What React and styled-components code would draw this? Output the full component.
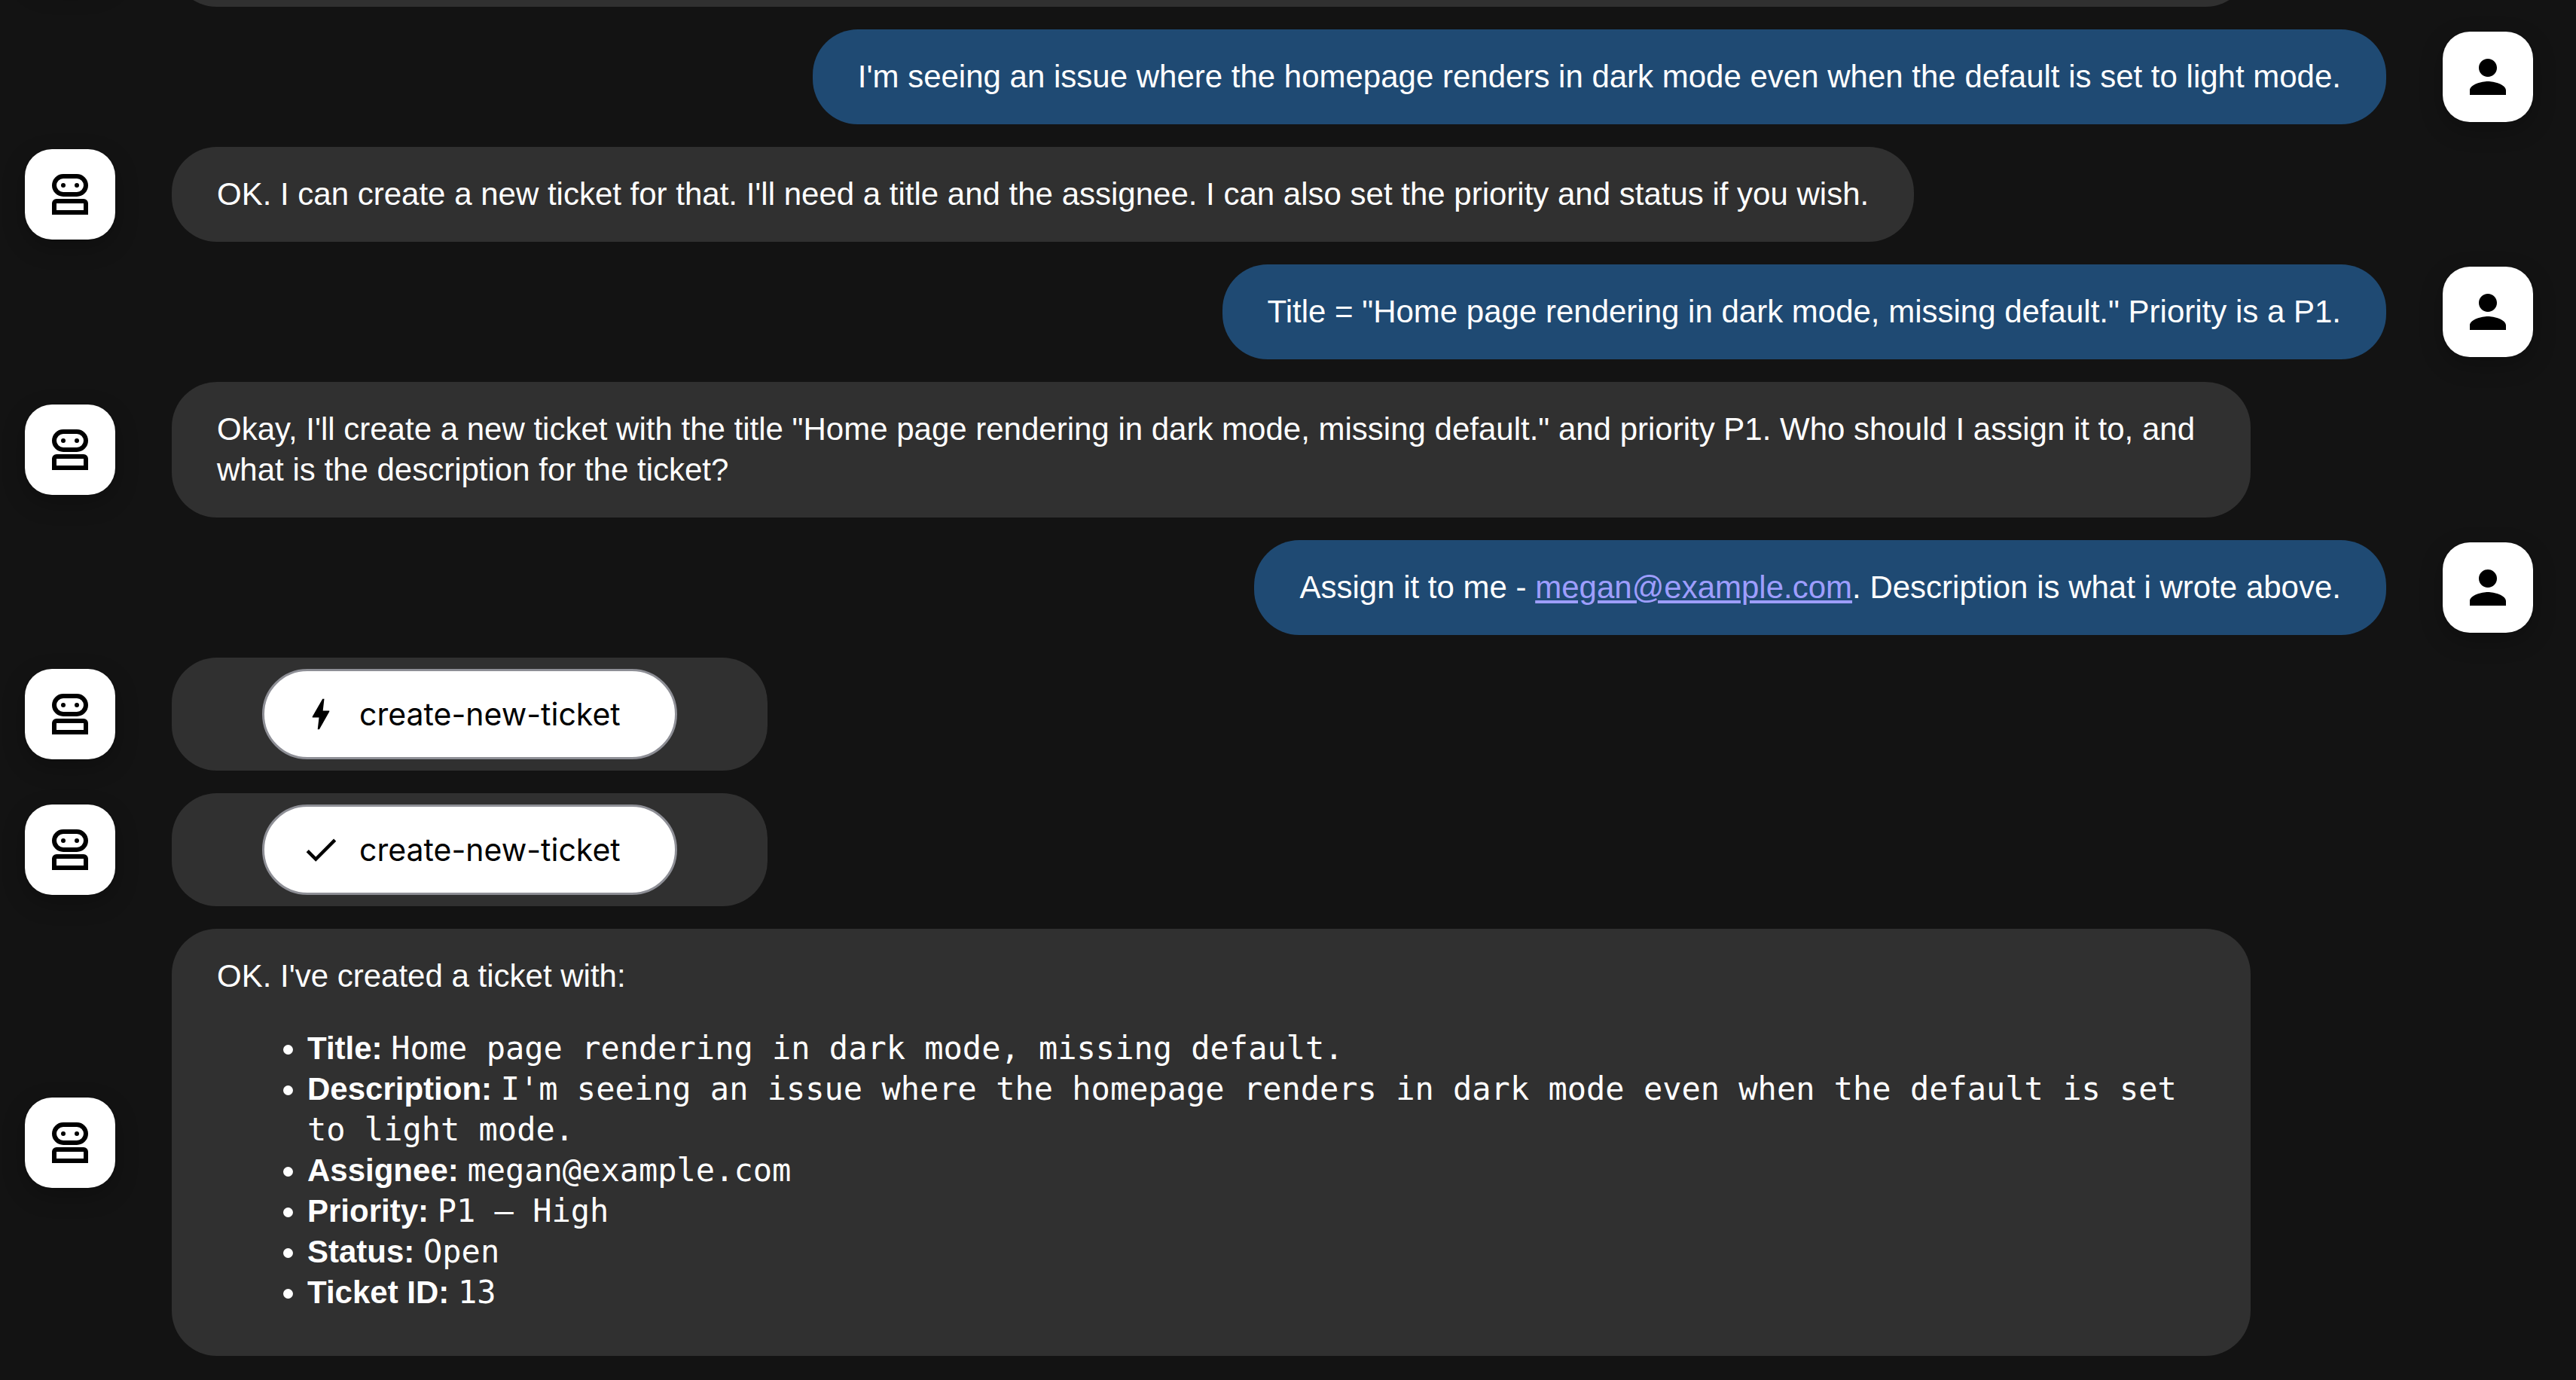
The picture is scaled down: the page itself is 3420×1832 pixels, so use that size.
import React from "react";
import styled, { createGlobalStyle } from "styled-components";

const GlobalStyle = createGlobalStyle`
  *, *::before, *::after {
    box-sizing: border-box;
  }

  body {
    margin: 0;
    background: #131313;
    color: #fff;
    font-family: "Liberation Sans", Arial, sans-serif;
    font-size: 42px;
    line-height: 54px;
  }
`;

/* The thread stays scrolled to its newest message. */
const Thread = styled.main`
  display: flex;
  flex-direction: column;
  justify-content: flex-end;
  gap: 30px;
  height: 100vh;
  overflow: hidden;
  padding: 0 57px 32px 33px;
`;

const MessageRow = styled.article`
  display: flex;
  flex-shrink: 0;
  flex-direction: ${({ $from }) => ($from === "user" ? "row-reverse" : "row")};
  align-items: center;
  gap: 75px;
`;

const Avatar = styled.div`
  display: flex;
  flex: none;
  align-items: center;
  justify-content: center;
  width: 120px;
  height: 120px;
  border-radius: 36px;
  background: #fff;
  color: #000;
  box-shadow: 0 10px 30px rgba(0, 0, 0, 0.25);

  svg {
    width: 72px;
    height: 72px;
  }
`;

const Lane = styled.div`
  display: flex;
  flex: 1;
  min-width: 0;
  justify-content: ${({ $from }) => ($from === "user" ? "flex-end" : "flex-start")};
  ${({ $from }) => ($from === "user" ? "padding-left: 375px;" : "padding-right: 375px;")}
`;

const Bubble = styled.div`
  padding: ${({ $chip }) => ($chip ? "15px 120px" : "36px 60px")};
  border-radius: 60px;
  background: ${({ $from }) => ($from === "user" ? "#1f4a73" : "#303030")};
`;

const EarlierBubble = styled(Bubble)`
  flex: 1;
  min-height: 180px;
`;

const Text = styled.p`
  margin: 0;
`;

const MailLink = styled.a`
  color: #9e9eff;
`;

const ToolChip = styled.button`
  display: flex;
  align-items: center;
  gap: 24px;
  height: 120px;
  padding: 0 72px 0 48px;
  border: 3px solid #8e8f96;
  border-radius: 60px;
  background: #fff;
  color: #000;
  font-family: Inter, sans-serif;
  font-size: 41px;
  line-height: 54px;

  svg {
    width: 54px;
    height: 54px;
  }
`;

const FieldList = styled.ul`
  margin: 42px 0 21px;
  padding-left: 120px;
`;

const FieldValue = styled.code`
  font-family: "DejaVu Sans Mono", monospace;
  font-size: 42px;
`;

const RobotIcon = () => (
  <svg viewBox="0 0 24 24" fill="currentColor" aria-hidden="true">
    <path
      fillRule="evenodd"
      d="M9 3h6a5 5 0 0 1 0 10H9A5 5 0 0 1 9 3zm0 2a3 3 0 0 0 0 6h6a3 3 0 0 0 0-6zM4 21v-5a2 2 0 0 1 2-2h12a2 2 0 0 1 2 2v5zm2-2h12v-3H6z"
    />
    <circle cx="9" cy="8" r="1" />
    <circle cx="15" cy="8" r="1" />
  </svg>
);

const PersonIcon = () => (
  <svg viewBox="0 0 24 24" fill="currentColor" aria-hidden="true">
    <path d="M12 12c2.21 0 4-1.79 4-4s-1.79-4-4-4-4 1.79-4 4 1.79 4 4 4zm0 2c-2.67 0-8 1.34-8 4v2h16v-2c0-2.66-5.33-4-8-4z" />
  </svg>
);

const BoltIcon = () => (
  <svg viewBox="0 0 24 24" fill="currentColor" aria-hidden="true">
    <path d="M13 3h1l-.8 7H17v.5L11.1 21h-1l.8-7H7v-.6z" />
  </svg>
);

const CheckIcon = () => (
  <svg viewBox="0 0 24 24" fill="currentColor" aria-hidden="true">
    <path d="M9 16.17 4.83 12l-1.42 1.41L9 19 21 7l-1.41-1.41z" />
  </svg>
);

const ticket = [
  ["Title", "Home page rendering in dark mode, missing default."],
  [
    "Description",
    "I'm seeing an issue where the homepage renders in dark mode even when the default is set to light mode.",
  ],
  ["Assignee", "megan@example.com"],
  ["Priority", "P1 – High"],
  ["Status", "Open"],
  ["Ticket ID", "13"],
];

function Message({ from, chip, children }) {
  return (
    <MessageRow $from={from}>
      <Avatar>{from === "user" ? <PersonIcon /> : <RobotIcon />}</Avatar>
      <Lane $from={from}>
        <Bubble $from={from} $chip={chip}>
          {children}
        </Bubble>
      </Lane>
    </MessageRow>
  );
}

export default function App() {
  return (
    <>
      <GlobalStyle />
      <Thread>
        <MessageRow $from="bot">
          <Avatar>
            <RobotIcon />
          </Avatar>
          <Lane $from="bot">
            <EarlierBubble $from="bot" />
          </Lane>
        </MessageRow>

        <Message from="user">
          <Text>
            I'm seeing an issue where the homepage renders in dark mode even when the default is set
            to light mode.
          </Text>
        </Message>

        <Message from="bot">
          <Text>
            OK. I can create a new ticket for that. I'll need a title and the assignee. I can also
            set the priority and status if you wish.
          </Text>
        </Message>

        <Message from="user">
          <Text>
            Title = "Home page rendering in dark mode, missing default." Priority is a P1.
          </Text>
        </Message>

        <Message from="bot">
          <Text>
            Okay, I'll create a new ticket with the title "Home page rendering in dark mode, missing
            default." and priority P1. Who should I assign it to, and what is the description for
            the ticket?
          </Text>
        </Message>

        <Message from="user">
          <Text>
            Assign it to me - <MailLink href="mailto:megan@example.com">megan@example.com</MailLink>
            . Description is what i wrote above.
          </Text>
        </Message>

        <Message from="bot" chip>
          <ToolChip type="button">
            <BoltIcon />
            create-new-ticket
          </ToolChip>
        </Message>

        <Message from="bot" chip>
          <ToolChip type="button">
            <CheckIcon />
            create-new-ticket
          </ToolChip>
        </Message>

        <Message from="bot">
          <Text>OK. I've created a ticket with:</Text>
          <FieldList>
            {ticket.map(([label, value]) => (
              <li key={label}>
                <strong>{label}:</strong> <FieldValue>{value}</FieldValue>
              </li>
            ))}
          </FieldList>
        </Message>
      </Thread>
    </>
  );
}
